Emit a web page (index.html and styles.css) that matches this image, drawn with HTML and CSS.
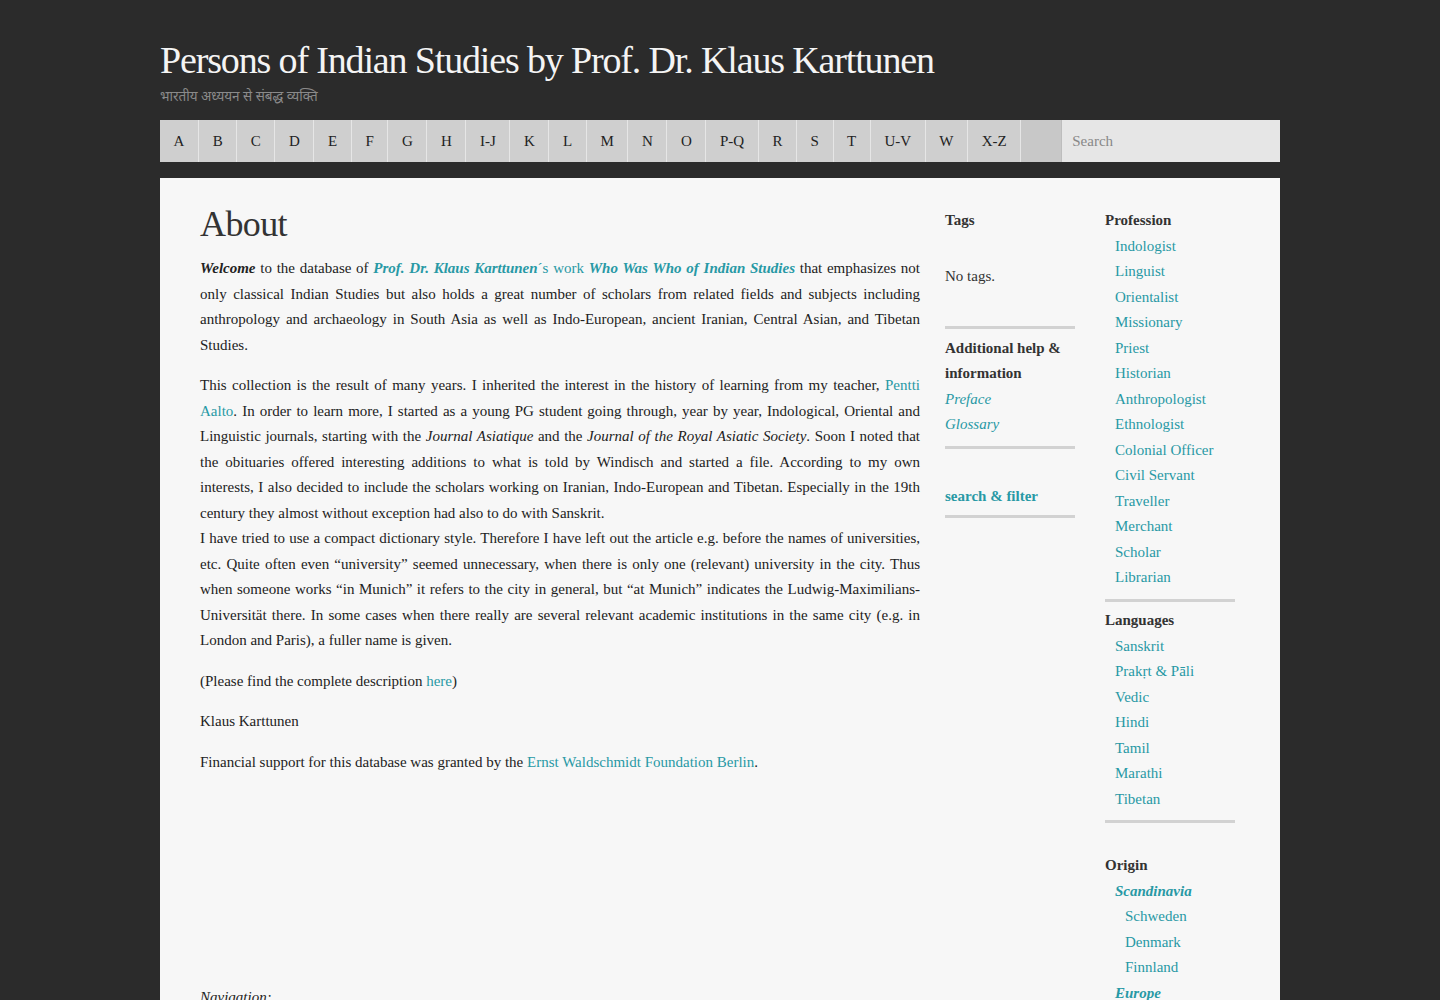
FILE: index.html
```html
<!DOCTYPE html>
<html lang="en">
<head>
<meta charset="utf-8">
<title>About – Persons of Indian Studies</title>
<link rel="stylesheet" href="styles.css">
</head>
<body>
<div class="site">
  <header class="masthead">
    <h1 class="site-title">Persons of Indian Studies by Prof. Dr. Klaus Karttunen</h1>
    <p class="site-tagline">भारतीय अध्ययन से संबद्ध व्यक्ति</p>
  </header>

  <nav class="alpha-nav">
    <a class="alpha-item" href="#">A</a>
    <a class="alpha-item" href="#">B</a>
    <a class="alpha-item" href="#">C</a>
    <a class="alpha-item" href="#">D</a>
    <a class="alpha-item" href="#">E</a>
    <a class="alpha-item" href="#">F</a>
    <a class="alpha-item" href="#">G</a>
    <a class="alpha-item" href="#">H</a>
    <a class="alpha-item" href="#">I-J</a>
    <a class="alpha-item" href="#">K</a>
    <a class="alpha-item" href="#">L</a>
    <a class="alpha-item" href="#">M</a>
    <a class="alpha-item" href="#">N</a>
    <a class="alpha-item" href="#">O</a>
    <a class="alpha-item" href="#">P-Q</a>
    <a class="alpha-item" href="#">R</a>
    <a class="alpha-item" href="#">S</a>
    <a class="alpha-item" href="#">T</a>
    <a class="alpha-item" href="#">U-V</a>
    <a class="alpha-item" href="#">W</a>
    <a class="alpha-item" href="#">X-Z</a>
    <span class="alpha-item alpha-blank"></span>
    <input class="alpha-search" type="text" placeholder="Search">
  </nav>

  <main class="panel">
    <article class="entry">
      <h2 class="entry-title">About</h2>
      <p><b><i>Welcome</i></b> to the database of <a class="strong-link" href="#">Prof. Dr. Klaus Karttunen</a><a href="#">´s work </a><a class="strong-link" href="#">Who Was Who of Indian Studies</a> that emphasizes not only classical Indian Studies but also holds a great number of scholars from related fields and subjects including anthropology and archaeology in South Asia as well as Indo-European, ancient Iranian, Central Asian, and Tibetan Studies.</p>
      <p>This collection is the result of many years. I inherited the interest in the history of learning from my teacher, <a href="#">Pentti Aalto</a>. In order to learn more, I started as a young PG student going through, year by year, Indological, Oriental and Linguistic journals, starting with the <i>Journal Asiatique</i> and the <i>Journal of the Royal Asiatic Society</i>. Soon I noted that the obituaries offered interesting additions to what is told by Windisch and started a file. According to my own interests, I also decided to include the scholars working on Iranian, Indo-European and Tibetan. Especially in the 19th century they almost without exception had also to do with Sanskrit.<br>I have tried to use a compact dictionary style. Therefore I have left out the article e.g. before the names of universities, etc. Quite often even “university” seemed unnecessary, when there is only one (relevant) university in the city. Thus when someone works “in Munich” it refers to the city in general, but “at Munich” indicates the Ludwig-Maximilians-Universität there. In some cases when there really are several relevant academic institutions in the same city (e.g. in London and Paris), a fuller name is given.</p>
      <p>(Please find the complete description <a href="#">here</a>)</p>
      <p>Klaus Karttunen</p>
      <p>Financial support for this database was granted by the <a href="#">Ernst Waldschmidt Foundation Berlin</a>.</p>
      <p class="entry-nav"><i>Navigation:</i></p>
    </article>

    <aside class="side-col">
      <section class="widget">
        <h3 class="widget-title">Tags</h3>
        <p class="widget-empty">No tags.</p>
      </section>
      <section class="widget widget-ruled widget-help">
        <h3 class="widget-title">Additional help &amp; information</h3>
        <ul class="widget-list widget-list-flat">
          <li><a href="#"><i>Preface</i></a></li>
          <li><a href="#"><i>Glossary</i></a></li>
        </ul>
      </section>
      <section class="widget widget-ruled widget-search">
        <a class="widget-action" href="#">search &amp; filter</a>
      </section>
      <div class="widget-ruled widget-end"></div>
    </aside>

    <aside class="side-col">
      <section class="widget">
        <h3 class="widget-title">Profession</h3>
        <ul class="widget-list">
          <li><a href="#">Indologist</a></li>
          <li><a href="#">Linguist</a></li>
          <li><a href="#">Orientalist</a></li>
          <li><a href="#">Missionary</a></li>
          <li><a href="#">Priest</a></li>
          <li><a href="#">Historian</a></li>
          <li><a href="#">Anthropologist</a></li>
          <li><a href="#">Ethnologist</a></li>
          <li><a href="#">Colonial Officer</a></li>
          <li><a href="#">Civil Servant</a></li>
          <li><a href="#">Traveller</a></li>
          <li><a href="#">Merchant</a></li>
          <li><a href="#">Scholar</a></li>
          <li><a href="#">Librarian</a></li>
        </ul>
      </section>
      <section class="widget widget-ruled widget-languages">
        <h3 class="widget-title">Languages</h3>
        <ul class="widget-list">
          <li><a href="#">Sanskrit</a></li>
          <li><a href="#">Prakṛt &amp; Pāli</a></li>
          <li><a href="#">Vedic</a></li>
          <li><a href="#">Hindi</a></li>
          <li><a href="#">Tamil</a></li>
          <li><a href="#">Marathi</a></li>
          <li><a href="#">Tibetan</a></li>
        </ul>
      </section>
      <section class="widget widget-ruled widget-origin">
        <h3 class="widget-title">Origin</h3>
        <ul class="widget-list">
          <li><a class="region" href="#">Scandinavia</a>
            <ul class="widget-sublist">
              <li><a href="#">Schweden</a></li>
              <li><a href="#">Denmark</a></li>
              <li><a href="#">Finnland</a></li>
            </ul>
          </li>
          <li><a class="region" href="#">Europe</a></li>
        </ul>
      </section>
    </aside>
  </main>
</div>
</body>
</html>
```
FILE: styles.css
```css
html, body {
  margin: 0;
  padding: 0;
}

body {
  background: #2b2b2b;
  color: #222;
  font-family: "Liberation Serif", "Times New Roman", serif;
  font-size: 15px;
}

a {
  color: #2899a5;
  text-decoration: none;
}

.site {
  width: 1120px;
  margin: 0 auto;
}

/* Masthead */
.masthead {
  padding-top: 37px;
}

.site-title {
  margin: 0;
  font-weight: normal;
  font-size: 38px;
  line-height: 46px;
  letter-spacing: -1.15px;
  color: #f4f4f4;
}

.site-tagline {
  margin: 4px 0 0;
  font-family: "Noto Sans", "DejaVu Sans", sans-serif;
  font-size: 13.5px;
  line-height: 18px;
  color: #8a8a8a;
}

/* Alphabet bar */
.alpha-nav {
  display: flex;
  height: 42px;
  margin-top: 15px;
  background: #cfcfcf;
}

.alpha-item {
  display: block;
  padding: 0 13.6px;
  line-height: 42px;
  border-left: 1px solid #e6e6e6;
  color: #222;
  font-size: 15px;
}

.alpha-item:first-child {
  border-left: 0;
}

.alpha-blank {
  width: 40px;
  padding: 0;
  background: #c8c8c8;
}

.alpha-search {
  flex: 1;
  min-width: 0;
  height: 42px;
  box-sizing: border-box;
  margin: 0;
  padding: 0 10px;
  border: 0;
  border-left: 1px solid #bdbdbd;
  background: #e6e6e6;
  font-family: "Liberation Serif", serif;
  font-size: 15px;
  color: #333;
  outline: none;
}

.alpha-search::placeholder {
  color: #888;
}

/* Content panel */
.panel {
  display: flex;
  align-items: flex-start;
  gap: 25px;
  margin-top: 16px;
  padding: 25px 45px 0 40px;
  min-height: 900px;
  background: #f7f7f7;
}

.entry {
  width: 720px;
  flex: none;
}

.entry-title {
  margin: 0 0 10px;
  font-weight: normal;
  font-size: 36px;
  line-height: 43px;
  letter-spacing: -0.6px;
  color: #333;
}

.entry p {
  margin: 0 0 15px;
  line-height: 25.5px;
  text-align: justify;
}

.strong-link {
  font-weight: bold;
  font-style: italic;
}

.entry .entry-nav {
  margin-top: 210px;
}

/* Sidebar columns */
.side-col {
  width: 130px;
  flex: none;
  padding-top: 5px;
}

.side-col + .side-col {
  margin-left: 5px;
}

.widget-title {
  margin: 0;
  font-size: 15px;
  line-height: 25.5px;
  color: #333;
}

.widget-empty {
  margin: 30.5px 0 0;
  line-height: 25.5px;
  color: #333;
}

.widget-ruled {
  border-top: 3px solid #d2d2d2;
  margin-top: 8px;
  padding-top: 5.5px;
}

.widget-help {
  margin-top: 36px;
  padding-top: 7px;
}

.widget-search {
  padding-top: 35px;
}

.widget-end {
  margin-top: 6px;
}

.widget-languages {
  padding-top: 6.5px;
}

.widget-origin {
  padding-top: 30px;
}

.widget-action {
  display: block;
  font-weight: bold;
  line-height: 25.5px;
}

.widget-list {
  list-style: none;
  margin: 0;
  padding: 0 0 0 10px;
  line-height: 25.5px;
}

.widget-list-flat {
  padding-left: 0;
}

.widget-sublist {
  list-style: none;
  margin: 0;
  padding: 0 0 0 10px;
}

.region {
  font-weight: bold;
  font-style: italic;
}
```
